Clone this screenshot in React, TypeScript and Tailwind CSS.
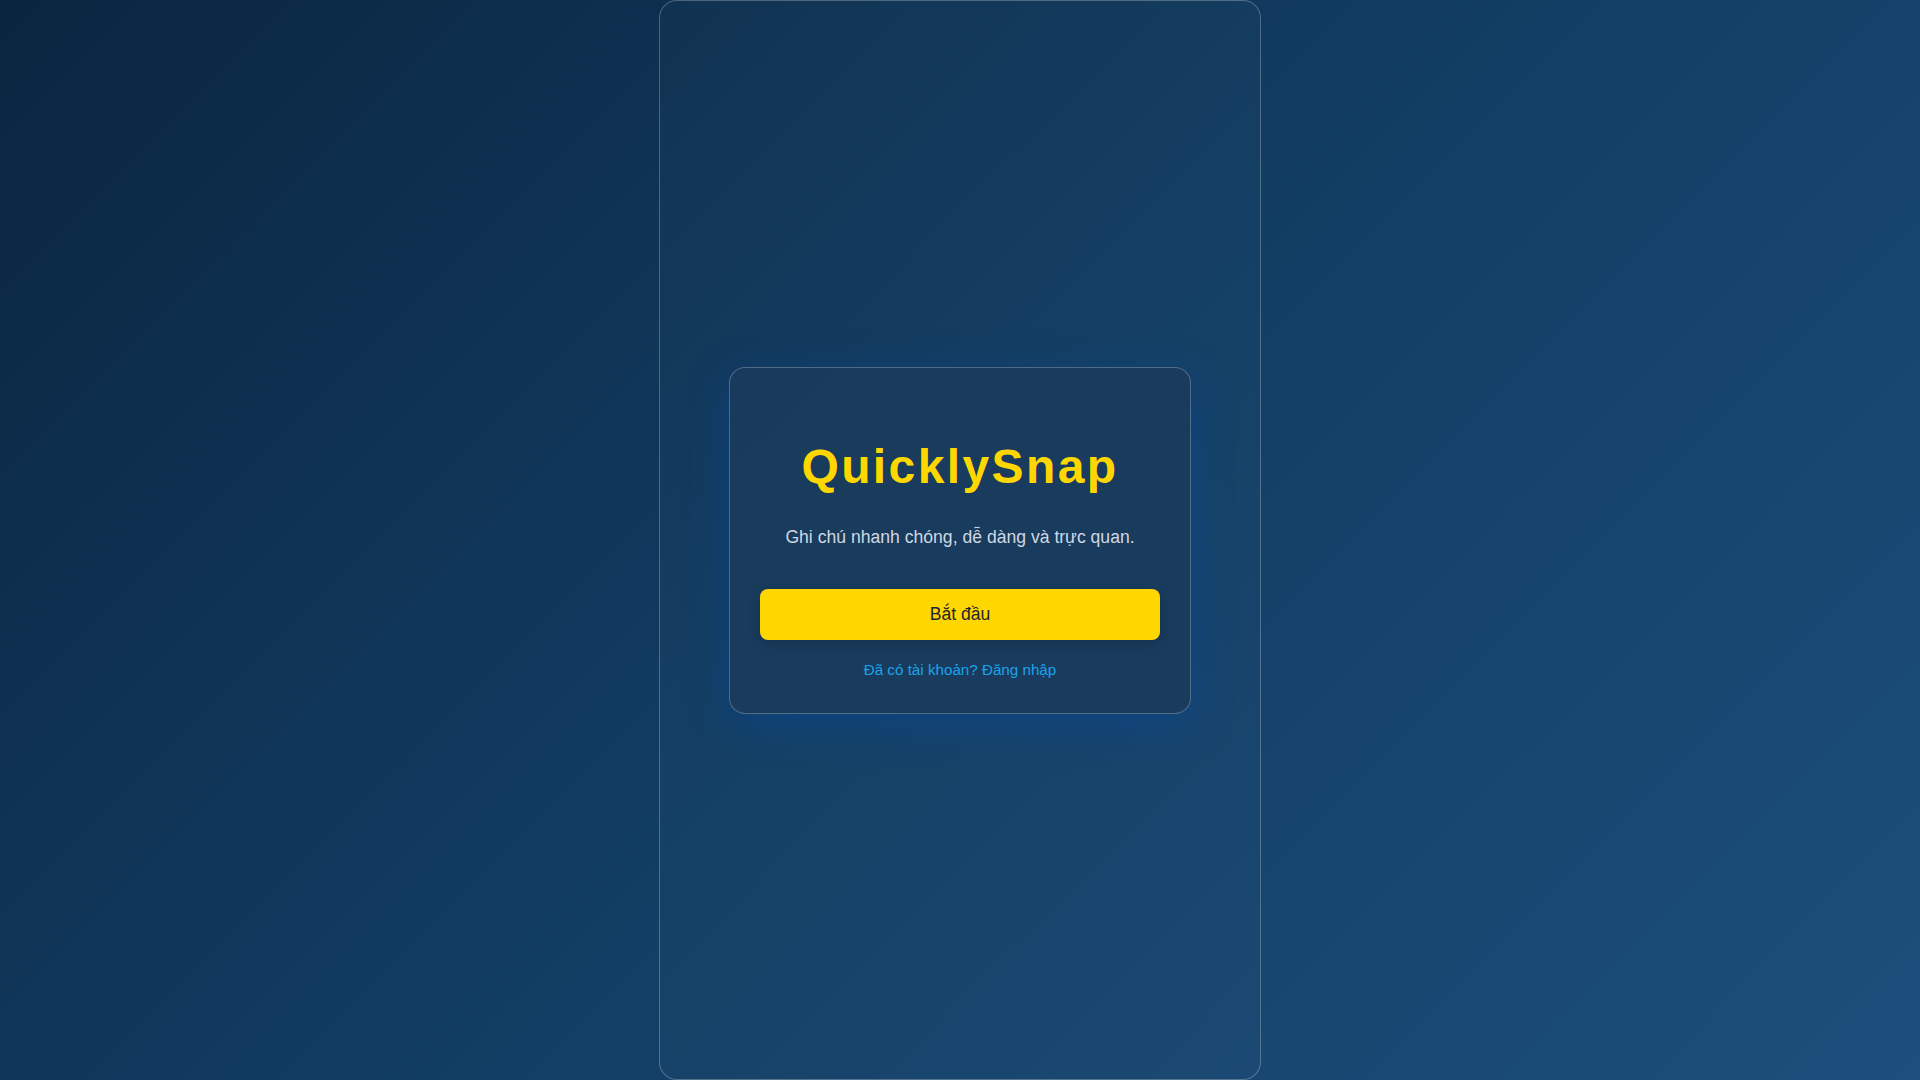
export default function App() {
  return (
    <div
      className="min-h-screen w-full bg-[linear-gradient(135deg,#0a2540_0%,#123d63_50%,#1c4f7c_100%)]"
      style={{ fontFamily: '"Liberation Sans", Arial, sans-serif' }}
    >
      {/* app frame */}
      <div className="mx-auto flex h-screen w-full max-w-[602px] items-center justify-center rounded-[18px] border border-white/25 bg-white/[0.015]">
        {/* welcome card */}
        <div className="flex w-[462px] flex-col items-center rounded-2xl border border-white/25 bg-[#193b5c]/90 px-[30px] pt-[75px] pb-[33px] shadow-[0_10px_40px_rgba(0,70,160,0.45)]">
          <h1 className="text-[48px] font-bold leading-none tracking-[0.05em] text-[#ffd700]">
            QuicklySnap
          </h1>
          <p className="mt-[32px] text-[17.6px] leading-[28px] text-[#cfd8e3]">
            Ghi chú nhanh chóng, dễ dàng và trực quan.
          </p>
          <button className="mt-[38px] h-[51px] w-full rounded-lg bg-[#ffd700] text-[17.6px] text-[#1f2430] shadow-[0_4px_14px_rgba(0,0,0,0.15)]">
            Bắt đầu
          </button>
          <a href="#" className="mt-[20px] text-[15.2px] leading-[20px] text-[#1aa3e8]">
            Đã có tài khoản? Đăng nhập
          </a>
        </div>
      </div>
    </div>
  );
}
